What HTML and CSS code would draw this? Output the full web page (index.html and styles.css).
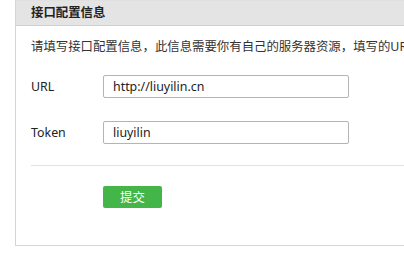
FILE: index.html
```html
<!DOCTYPE html>
<html lang="zh-CN">
<head>
    <meta charset="UTF-8">
    <meta name="viewport" content="width=device-width, initial-scale=1.0">
    <title>接口配置信息</title>
    <link rel="stylesheet" href="styles.css">
</head>
<body>
    <div class="panel">
        <div class="panel-head">接口配置信息</div>
        <div class="panel-body">
            <p class="desc">请填写接口配置信息，此信息需要你有自己的服务器资源，填写的URL需要正确响应微信发送的Token验证</p>
            <div class="form-row">
                <label for="url">URL</label>
                <input type="text" id="url" value="http://liuyilin.cn">
            </div>
            <div class="form-row">
                <label for="token">Token</label>
                <input type="text" id="token" value="liuyilin">
            </div>
            <div class="form-actions">
                <button class="submit-button">提交</button>
            </div>
        </div>
    </div>
</body>
</html>
```

FILE: styles.css
```css
body {
    margin: 0;
    padding: 0;
    background: #fff;
    font-family: "Noto Sans", "Noto Sans CJK SC", sans-serif;
    font-size: 12.4px;
    color: #333;
    overflow: hidden;
}
.panel {
    margin-left: 15px;
    width: 440px;
    border: 1px solid #d4d4d4;
    border-top-color: #e0e0e0;
}
.panel-head {
    height: 24px;
    line-height: 24px;
    padding-left: 15px;
    background: #e4e4e4;
    border-bottom: 1px solid #cfcfcf;
    font-weight: bold;
    color: #222;
}
.panel-body {
    padding: 14px 0 37px 15px;
}
.desc {
    margin: 0;
    line-height: 14px;
    white-space: nowrap;
    color: #333;
}
.form-row {
    display: flex;
    align-items: center;
    margin-top: 21px;
}
.form-row + .form-row {
    margin-top: 23px;
}
.form-row label {
    width: 72px;
    color: #222;
}
.form-row input {
    box-sizing: border-box;
    width: 246px;
    height: 23px;
    margin: 0;
    padding: 0 9px;
    border: 1px solid #b4b4b4;
    border-radius: 2px;
    font-family: inherit;
    font-size: 12.4px;
    color: #222;
}
.form-actions {
    margin-top: 21px;
    padding-top: 20px;
    padding-left: 72px;
    border-top: 1px solid #e2e2e2;
}
.submit-button {
    display: block;
    width: 59px;
    height: 22px;
    padding: 0;
    border: none;
    border-radius: 2px;
    background: #44b549;
    color: #fff;
    font-family: inherit;
    font-size: 12.4px;
    cursor: pointer;
}
```
